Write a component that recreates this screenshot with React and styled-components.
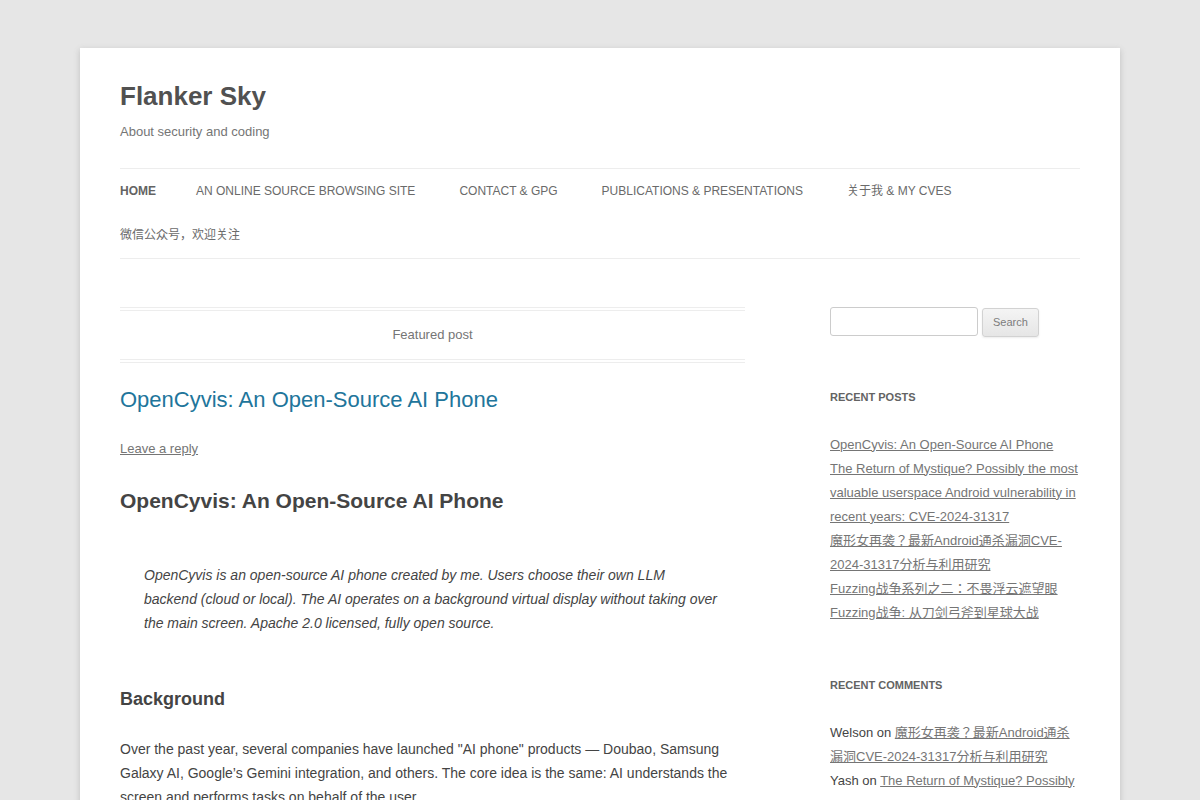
import React from "react";
import styled, { createGlobalStyle } from "styled-components";

const GlobalStyle = createGlobalStyle`
  html, body { margin: 0; padding: 0; }
  body {
    background: #e6e6e6;
    font-family: "Liberation Sans", Arial, "Noto Sans CJK JP", sans-serif;
    color: #444;
    font-size: 14px;
    line-height: 24px;
  }
  * { box-sizing: border-box; }
`;

const PageShell = styled.div`
  padding: 48px 0;
`;

const Page = styled.div`
  max-width: 1040px;
  margin: 0 auto;
  padding: 0 40px;
  background: #fff;
  box-shadow: 0 2px 6px rgba(100, 100, 100, 0.3);
`;

const Header = styled.header`
  padding: 24px 0;
`;

const SiteTitle = styled.h1`
  margin: 0;
  font-size: 26px;
  line-height: 48px;
  font-weight: bold;
  a {
    color: #515151;
    text-decoration: none;
  }
`;

const Tagline = styled.h2`
  margin: 0;
  font-size: 13px;
  line-height: 24px;
  font-weight: normal;
  color: #757575;
`;

const Nav = styled.nav`
  margin-top: 24px;
`;

const Menu = styled.ul`
  display: flex;
  flex-wrap: wrap;
  column-gap: 44px;
  list-style: none;
  margin: 0;
  padding: 0;
  border-top: 1px solid #ededed;
  border-bottom: 1px solid #ededed;
`;

const MenuItem = styled.li`
  font-size: 12px;
  line-height: 44.3px;
  text-transform: uppercase;
  margin-right: ${(p) => (p.$current ? "-4px" : "0")};
  a {
    color: ${(p) => (p.$current ? "#636363" : "#6a6a6a")};
    font-weight: ${(p) => (p.$current ? "bold" : "normal")};
    text-decoration: none;
  }
`;

const Main = styled.div`
  display: flex;
  justify-content: space-between;
  align-items: flex-start;
  margin-top: 24px;
`;

const Content = styled.main`
  width: 65.104%;
`;

const Article = styled.article``;

const FeaturedPost = styled.div`
  border-top: 4px double #ededed;
  border-bottom: 4px double #ededed;
  color: #757575;
  font-size: 13px;
  line-height: 48px;
  margin-bottom: 24px;
  text-align: center;
`;

const EntryHeader = styled.header`
  margin-bottom: 24px;
`;

const EntryTitle = styled.h1`
  margin: 0;
  font-size: 22px;
  line-height: 26.4px;
  font-weight: normal;
  a {
    color: #21759b;
    text-decoration: none;
  }
`;

const CommentsLink = styled.div`
  margin-top: 24px;
  font-size: 13px;
  line-height: 24px;
  a {
    color: #757575;
    text-decoration: underline;
  }
`;

const EntryContent = styled.div`
  h1 {
    font-size: 21px;
    line-height: 31.5px;
    margin: 24px 0;
    color: #444;
  }
  h2 {
    font-size: 18px;
    line-height: 28.8px;
    margin: 24px 0;
    color: #444;
  }
  p {
    margin: 0 0 24px;
    line-height: 24px;
  }
`;

const Quote = styled.blockquote`
  font-style: italic;
  padding: 22px 24px 26px;
  margin: 0 0 24px;
  p:last-child {
    margin-bottom: 0;
  }
`;

const Sidebar = styled.aside`
  width: 26.0417%;
  font-size: 13px;
  line-height: 24px;
`;

const Widget = styled.section`
  margin: 0 0 48px;
`;

const SearchForm = styled.form`
  display: flex;
  align-items: flex-start;
  gap: 4px;
`;

const SearchInput = styled.input`
  width: 148px;
  height: 29px;
  padding: 6px;
  border: 1px solid #ccc;
  border-radius: 3px;
  font-family: inherit;
  font-size: 13px;
`;

const SearchButton = styled.button`
  margin-top: 1px;
  height: 29px;
  padding: 6px 10px;
  font-family: inherit;
  font-size: 11px;
  line-height: 15.7px;
  color: #7c7c7c;
  background: linear-gradient(to bottom, #f4f4f4, #e6e6e6);
  border: 1px solid #d2d2d2;
  border-radius: 3px;
  box-shadow: 0 1px 2px rgba(64, 64, 64, 0.1);
`;

const WidgetTitle = styled.h3`
  margin: 0 0 24px;
  font-size: 11px;
  line-height: 24px;
  font-weight: bold;
  text-transform: uppercase;
  color: #636363;
`;

const WidgetList = styled.ul`
  list-style: none;
  margin: 0;
  padding: 0;
  li {
    line-height: 24px;
  }
  a {
    color: #757575;
    text-decoration: underline;
  }
`;

const navItems = [
  { label: "Home", current: true },
  { label: "An online source browsing site" },
  { label: "Contact & GPG" },
  { label: "Publications & Presentations" },
  { label: "关于我 & My CVEs" },
  { label: "微信公众号，欢迎关注" },
];

const recentPosts = [
  "OpenCyvis: An Open-Source AI Phone",
  "The Return of Mystique? Possibly the most valuable userspace Android vulnerability in recent years: CVE-2024-31317",
  "魔形女再袭？最新Android通杀漏洞CVE-2024-31317分析与利用研究",
  "Fuzzing战争系列之二：不畏浮云遮望眼",
  "Fuzzing战争: 从刀剑弓斧到星球大战",
];

const recentComments = [
  { author: "Welson", post: "魔形女再袭？最新Android通杀漏洞CVE-2024-31317分析与利用研究" },
  { author: "Yash", post: "The Return of Mystique? Possibly the most valuable userspace Android vulnerability in recent years: CVE-2024-31317" },
  { author: "flanker017", post: "Fuzzing战争系列之二：不畏浮云遮望眼" },
];

export default function App() {
  return (
    <>
      <GlobalStyle />
      <PageShell>
        <Page>
          <Header>
            <SiteTitle>
              <a href="#">Flanker Sky</a>
            </SiteTitle>
            <Tagline>About security and coding</Tagline>
            <Nav>
              <Menu>
                {navItems.map((item) => (
                  <MenuItem key={item.label} $current={item.current}>
                    <a href="#">{item.label}</a>
                  </MenuItem>
                ))}
              </Menu>
            </Nav>
          </Header>
          <Main>
            <Content>
              <Article>
                <FeaturedPost>Featured post</FeaturedPost>
                <EntryHeader>
                  <EntryTitle>
                    <a href="#">OpenCyvis: An Open-Source AI Phone</a>
                  </EntryTitle>
                  <CommentsLink>
                    <a href="#">Leave a reply</a>
                  </CommentsLink>
                </EntryHeader>
                <EntryContent>
                  <h1>OpenCyvis: An Open-Source AI Phone</h1>
                  <Quote>
                    <p>
                      OpenCyvis is an open-source AI phone created by me. Users choose their own LLM
                      backend (cloud or local). The AI operates on a background virtual display without
                      taking over the main screen. Apache 2.0 licensed, fully open source.
                    </p>
                  </Quote>
                  <h2>Background</h2>
                  <p>
                    Over the past year, several companies have launched "AI phone" products — Doubao,
                    Samsung Galaxy AI, Google’s Gemini integration, and others. The core idea is the
                    same: AI understands the screen and performs tasks on behalf of the user.
                  </p>
                  <p>
                    However, most of these products are closed systems. The model, the prompts and the
                    execution environment are all controlled by the vendor, and the AI usually takes
                    over the foreground screen while it works, so the user cannot use the phone at the
                    same time.
                  </p>
                  <p>
                    OpenCyvis tries a different approach: the agent runs on a virtual display in the
                    background, and the user keeps full control of the main screen.
                  </p>
                </EntryContent>
              </Article>
            </Content>
            <Sidebar>
              <Widget>
                <SearchForm onSubmit={(e) => e.preventDefault()}>
                  <SearchInput type="text" aria-label="Search for" />
                  <SearchButton type="submit">Search</SearchButton>
                </SearchForm>
              </Widget>
              <Widget>
                <WidgetTitle>Recent Posts</WidgetTitle>
                <WidgetList>
                  {recentPosts.map((t) => (
                    <li key={t}>
                      <a href="#">{t}</a>
                    </li>
                  ))}
                </WidgetList>
              </Widget>
              <Widget>
                <WidgetTitle>Recent Comments</WidgetTitle>
                <WidgetList>
                  {recentComments.map((c) => (
                    <li key={c.author}>
                      {c.author} on <a href="#">{c.post}</a>
                    </li>
                  ))}
                </WidgetList>
              </Widget>
            </Sidebar>
          </Main>
        </Page>
      </PageShell>
    </>
  );
}
